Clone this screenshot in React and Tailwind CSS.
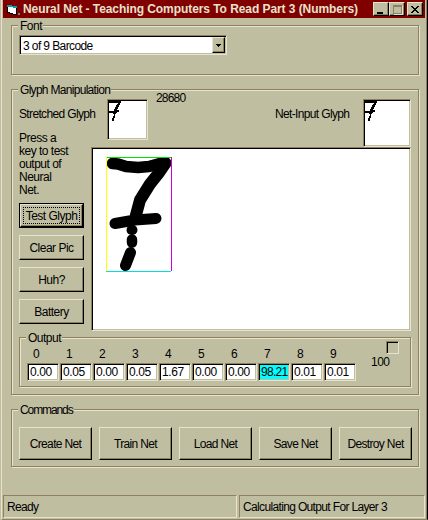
import React from "react";

const face = "bg-[#c0bea0]";
const raised =
  "border border-t-[#e8e2ce] border-l-[#e8e2ce] border-r-black border-b-black shadow-[inset_-1px_-1px_0_#8f8060]";
const sunken =
  "border border-t-[#8f8060] border-l-[#8f8060] border-r-[#e8e2ce] border-b-[#e8e2ce] shadow-[inset_1px_1px_0_#000,inset_-1px_-1px_0_#c0bea0]";

function Group({ title, legendWidth, className, children }) {
  return (
    <section
      className={`relative ml-2 w-[408px] border border-[#8f8060] shadow-[inset_1px_1px_0_#e8e2ce,1px_1px_0_#e8e2ce] ${className}`}
    >
      <Legend title={title} legendWidth={legendWidth} />
      {children}
    </section>
  );
}

function Legend({ title, legendWidth }) {
  return (
    <div
      className={`absolute left-[6px] -top-[7px] h-[14px] pl-[2px] leading-[14px] whitespace-nowrap ${face} ${legendWidth}`}
    >
      {title}
    </div>
  );
}

function Button({ children, className = "", focused = false }) {
  if (focused) {
    return (
      <button className={`h-[25px] w-[65px] border border-black p-0 ${className}`}>
        <span className={`flex h-[23px] w-[63px] p-[2px] ${raised}`}>
          <span className="flex flex-1 items-center justify-center border border-dotted border-black">{children}</span>
        </span>
      </button>
    );
  }
  return <button className={`flex items-center justify-center p-0 ${raised} ${className}`}>{children}</button>;
}

function SmallSeven({ className }) {
  return (
    <svg className={className} width="12" height="21" viewBox="0 0 12 21" shapeRendering="crispEdges">
      <path
        d="M0 0h12v2H0zM9 2h2v1H9zM8 3h3v1H8zM7 4h3v2H7zM6 6h3v2H6zM5 8h3v1H5zM5 9h5v1H5zM0 10h10v1H0zM0 11h8v1H0zM4 12h3v1H4zM5 13h1v2H5zM4 15h2v2H4zM3 17h2v3H3z"
        fill="#000"
      />
    </svg>
  );
}

function TitleButton({ children, className = "" }) {
  return (
    <button className={`flex h-[14px] w-[16px] items-center justify-center p-0 ${face} ${raised} ${className}`}>
      {children}
    </button>
  );
}

const outputs = ["0.00", "0.05", "0.00", "0.05", "1.67", "0.00", "0.00", "98.21", "0.01", "0.01"];

export default function App() {
  return (
    <div
      className={`h-[520px] w-[428px] overflow-hidden border-l border-[#c0bea0] font-['Liberation_Sans',Arial,sans-serif] text-[12px] tracking-[-0.65px] text-black ${face}`}
    >
      <main className="flex h-[520px] w-[427px] flex-col border-r border-b border-l border-r-black border-b-[#8f8060] border-l-[#e8e2ce] pl-px shadow-[inset_-1px_0_0_#8f8060]">
        <header className="flex h-[18px] w-[422px] shrink-0 items-start bg-[#800000] pt-[2px] pl-[4px]">
          <svg className="mt-[2px]" width="14" height="12" viewBox="0 0 14 12" shapeRendering="crispEdges">
            <path d="M0 1h5v1h5v9H6v-1H3V9H0z" fill="#000" />
            <path d="M1 2h4v1h4v7H6V9H3V8H1z" fill="#fff" />
            <path d="M0 1h5v1h5v2H6V3H0z" fill="#00a0a0" />
            <path d="M11 9h2v2h-2z" fill="#808080" />
          </svg>
          <h1 className="ml-[2px] w-[347px] text-[12px] leading-[14px] font-bold tracking-[-0.07px] whitespace-nowrap text-[#e8e2ce]">
            Neural Net - Teaching Computers To Read Part 3 (Numbers)
          </h1>
          <TitleButton className="ml-[3px]">
            <i className="mt-[8px] mr-[2px] h-[2px] w-[6px] bg-black" />
          </TitleButton>
          <TitleButton>
            <i className="h-[9px] w-[9px] border border-t-2 border-[#8f8060] shadow-[1px_1px_0_#e8e2ce]" />
          </TitleButton>
          <TitleButton className="ml-[2px]">
            <svg width="8" height="7" viewBox="0 0 8 7" shapeRendering="crispEdges">
              <path d="M0 0h2v1h1v1h2V1h1V0h2v1H7v1H6v1H5v1h1v1h1v1h1v1H6V6H5V5H3v1H2v1H0V6h1V5h1V4h1V3H2V2H1V1H0z" />
            </svg>
          </TitleButton>
        </header>

        <Group title="Font" legendWidth="w-[25px] tracking-[-0.5px]" className="mt-[7px] h-[50px] shrink-0">
          <div className={`mt-[9px] ml-[7px] flex h-[20px] w-[208px] bg-white p-px ${sunken}`}>
            <span className="flex-1 pl-[2px] leading-[18px] tracking-[-0.6px]">3 of 9 Barcode</span>
            <button className={`flex w-[13px] items-center justify-center p-0 ${face} ${raised}`}>
              <svg width="5" height="3" viewBox="0 0 5 3" shapeRendering="crispEdges">
                <path d="M0 0h5v1H4v1H3v1H2V2H1V1H0z" />
              </svg>
            </button>
          </div>
        </Group>

        <Group title="Glyph Manipulation" legendWidth="w-[93px] tracking-[-0.7px]" className="mt-[14px] h-[306px] shrink-0">
          <div className="flex h-[57px]">
            <span className="mt-[17px] ml-[7px] w-[88px] leading-[14px]">Stretched Glyph</span>
            <div className={`mt-[9px] h-[41px] w-[41px] bg-white pt-px pl-px ${sunken}`}>
              <SmallSeven />
            </div>
            <span className="mt-px ml-[8px] w-[119px] leading-[14px] tracking-[-0.8px]">28680</span>
            <span className="mt-[17px] w-[88px] leading-[14px]">Net-Input Glyph</span>
            <div className={`mt-[9px] h-[48px] w-[48px] bg-white pt-px pl-px ${sunken}`}>
              <SmallSeven />
            </div>
          </div>
          <div className="flex h-[183px]">
            <div className="ml-[7px] w-[72px]">
              <p className="-mt-[15px] h-[71px] leading-[13px] tracking-[-0.5px]">
                Press a<br />key to test<br />output of<br />Neural<br />Net.
              </p>
              <div className="flex flex-col gap-[7px] tracking-[-0.5px]">
                <Button focused>Test Glyph</Button>
                <Button className="h-[25px] w-[65px]">Clear Pic</Button>
                <Button className="h-[25px] w-[65px]">Huh?</Button>
                <Button className="h-[25px] w-[65px]">Battery</Button>
              </div>
            </div>
            <div className={`h-[184px] w-[320px] bg-white pt-[9px] pl-[14px] ${sunken}`}>
              <svg width="67" height="116" viewBox="106 157 67 116">
                <g fill="none" stroke="#000" strokeLinecap="round" strokeLinejoin="round">
                  <path d="M112.5 163.5L118 164L126 166.5L138 167.5L149 166.5L158 164L165.5 163" strokeWidth="11.5" />
                  <path d="M165.5 163L158 174L150 184L140 200L136 215" strokeWidth="12" />
                  <path d="M115 223.5L135 220L156 218.5" strokeWidth="11" />
                  <path d="M131.5 230h1" strokeWidth="10" />
                  <path d="M132 239.5v3" strokeWidth="10.500" />
                  <path d="M130.5 252.500L125.5 265.5" strokeWidth="11" />
                </g>
                <path d="M106.5 157v114" stroke="#ff0" />
                <path d="M107 157.5h64" stroke="#00e000" />
                <path d="M171.5 157v114" stroke="#d000d0" />
                <path d="M106 271.5h65" stroke="#00e0e0" />
              </svg>
            </div>
          </div>
          <section className="relative mt-[7px] ml-[7px] h-[50px] w-[392px] border border-[#8f8060] shadow-[inset_1px_1px_0_#e8e2ce,1px_1px_0_#e8e2ce]">
            <Legend title="Output" legendWidth="w-[36px] tracking-[-0.5px]" />
            <div className="flex">
              <div className="mt-[9px] ml-[7px] flex gap-px">
                {outputs.map((value, i) => (
                  <label key={i} className="flex w-[32px] flex-col">
                    <span className="h-[16px] pl-[6px] leading-[14px]">{i}</span>
                    <span
                      className={`h-[18px] w-[32px] pl-[2px] leading-[17px] ${
                        i === 7 ? "bg-[#00ffff] tracking-[-0.7px]" : "bg-white tracking-[-0.4px]"
                      } ${sunken}`}
                    >
                      {value}
                    </span>
                  </label>
                ))}
              </div>
              <div className="ml-[14px] flex w-[30px] flex-col">
                <span className={`mt-[3px] ml-[16px] h-[13px] w-[13px] shrink-0 ${face} ${sunken}`} />
                <span className="pt-px pl-px leading-[14px] tracking-[-0.5px]">100</span>
              </div>
            </div>
          </section>
        </Group>

        <Group title="Commands" legendWidth="w-[56px] tracking-[-1.1px]" className="mt-[14px] h-[58px] shrink-0">
          <div className="mt-[17px] ml-[7px] flex gap-[7px]">
            {["Create Net", "Train Net", "Load Net", "Save Net", "Destroy Net"].map((name) => (
              <Button key={name} className="h-[33px] w-[73px] whitespace-nowrap">
                {name}
              </Button>
            ))}
          </div>
        </Group>

        <footer className="mt-[28px] flex h-[23px] gap-[2px]">
          <div className="w-[234px] border border-t-[#8f8060] border-l-[#8f8060] border-r-[#e8e2ce] border-b-[#e8e2ce] pl-[3px] leading-[22px]">
            Ready
          </div>
          <div className="w-[186px] border border-t-[#8f8060] border-l-[#8f8060] border-r-[#e8e2ce] border-b-[#e8e2ce] pl-[3px] leading-[22px]">
            Calculating Output For Layer 3
          </div>
        </footer>
      </main>
    </div>
  );
}
